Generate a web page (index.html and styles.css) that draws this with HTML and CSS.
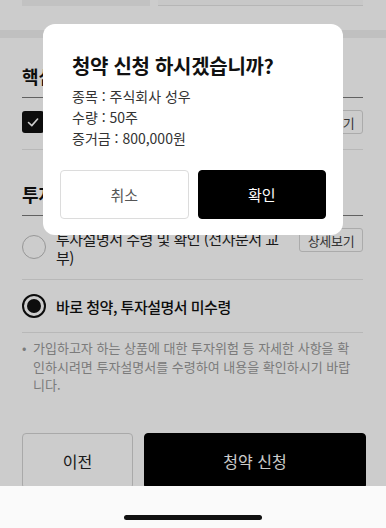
FILE: index.html
```html
<!DOCTYPE html>
<html lang="ko">
<head>
<meta charset="utf-8">
<link rel="stylesheet" href="styles.css">
</head>
<body>
<div class="page">
  <div class="fields">
    <div class="field field-gray"></div>
    <div class="field field-line"></div>
  </div>
  <div class="band"></div>

  <section class="section">
    <h2 class="sec-title">핵심설명서 확인</h2>
    <div class="row row-check">
      <span class="checkbox">
        <svg width="22" height="22" viewBox="0 0 22 22"><polyline points="6.5,11.5 9.8,14.6 15.6,8" fill="none" stroke="#fff" stroke-width="1.6" stroke-linecap="round" stroke-linejoin="round"/></svg>
      </span>
      <span class="row-text">핵심설명서 확인</span>
      <button class="detail">상세보기</button>
    </div>
  </section>

  <section class="section">
    <h2 class="sec-title sec-title2">투자설명서 교부 방식</h2>
    <div class="row row-radio1">
      <span class="radio"></span>
      <span class="row-text radio-text">투자설명서 수령 및 확인 (전자문서 교부)</span>
      <button class="detail">상세보기</button>
    </div>
    <div class="row row-radio2">
      <span class="radio radio-on"><span class="dot"></span></span>
      <span class="row-text radio-text strong">바로 청약, 투자설명서 미수령</span>
    </div>
    <p class="note"><span class="bullet">•</span><span class="note-text">가입하고자 하는 상품에 대한 투자위험 등 자세한 사항을 확인하시려면 투자설명서를 수령하여 내용을 확인하시기 바랍니다.</span></p>
  </section>

  <div class="actions">
    <button class="btn btn-prev">이전</button>
    <button class="btn btn-submit">청약 신청</button>
  </div>
</div>

<div class="overlay"></div>

<div class="modal">
  <h1 class="modal-title">청약 신청 하시겠습니까?</h1>
  <div class="modal-info">
    <p>종목 : 주식회사 성우</p>
    <p>수량 : 50주</p>
    <p>증거금 : 800,000원</p>
  </div>
  <div class="modal-btns">
    <button class="mbtn mbtn-cancel">취소</button>
    <button class="mbtn mbtn-ok">확인</button>
  </div>
</div>

<div class="home-bar"><span class="indicator"></span></div>
</body>
</html>
```
FILE: styles.css
```css
* { box-sizing: border-box; }
html, body { margin: 0; padding: 0; }
body {
  width: 386px;
  height: 528px;
  overflow: hidden;
  background: #fff;
  font-family: "Noto Sans CJK KR", "Noto Sans", sans-serif;
  color: #111;
}
.page { width: 386px; }

.fields {
  display: flex;
  gap: 8px;
  height: 6px;
  padding: 0 23px 0 22px;
}
.field { height: 6px; }
.field-gray { width: 128px; background: #f3f3f3; }
.field-line { flex: 1; border-bottom: 1px solid #e4e4e4; background: #fafafa; }

.band { margin-top: 24px; height: 8px; background: #f1f1f1; }

.section { padding: 0 23px 0 22px; }
.sec-title {
  margin: 0;
  padding: 25px 0 8px;
  font-size: 18px;
  line-height: 26px;
  font-weight: 700;
  border-bottom: 1px solid #7a7a7a;
}
.sec-title2 { padding-top: 31px; }

.row {
  display: flex;
  align-items: center;
  border-bottom: 1px solid #e6e6e6;
}
.row-check { padding: 12px 0 15px; }
.checkbox {
  width: 22px; height: 22px;
  border-radius: 3px;
  background: #111;
  display: flex;
  flex: none;
}
.row-text { flex: 1; margin-left: 12px; font-size: 15px; }
.detail {
  flex: none;
  width: 64px;
  height: 24px;
  padding: 0;
  border: 1px solid #d6d6d6;
  border-radius: 3px;
  background: #fff;
  font-family: inherit;
  font-size: 13px;
  color: #444;
  letter-spacing: -0.3px;
}
.row-radio1 { align-items: flex-start; padding: 13px 0 12px; }
.row-radio1 .radio { margin-top: 6px; }
.row-radio1 .detail { margin-top: -1px; margin-left: 8px; }
.row-radio2 { padding: 14px 0 14px; }
.radio {
  width: 24px; height: 24px;
  flex: none;
  border-radius: 50%;
  border: 1px solid #bdbdbd;
  display: flex;
  align-items: center;
  justify-content: center;
}
.radio-on { border: 2px solid #111; }
.dot { width: 14px; height: 14px; border-radius: 50%; background: #111; }
.radio-text {
  margin-left: 10px;
  font-size: 15px;
  line-height: 19px;
  letter-spacing: -0.5px;
  color: #222;
}
.strong { font-weight: 500; color: #111; }

.note {
  margin: 0;
  padding: 6px 10px 0 0;
  display: flex;
  font-size: 13px;
  line-height: 18.5px;
  color: #9a9a9a;
}
.bullet { width: 11px; flex: none; }
.note-text { flex: 1; word-break: break-all; line-break: anywhere; }

.actions {
  display: flex;
  gap: 11px;
  margin-top: 38px;
  padding: 0 20px 0 22px;
}
.btn {
  height: 56px;
  border-radius: 4px;
  font-family: inherit;
  font-size: 16px;
  padding: 0;
}
.btn-prev { width: 111px; background: #fff; border: 1px solid #d4d4d4; color: #222; }
.btn-submit { flex: 1; background: #000; border: 1px solid #000; color: #fff; }

.overlay {
  position: fixed;
  inset: 0;
  background: rgba(0, 0, 0, 0.2);
}

.modal {
  position: fixed;
  left: 43px;
  top: 24px;
  width: 300px;
  height: 211px;
  background: #fff;
  border-radius: 12px;
  padding: 28px 17px 16px;
}
.modal-title {
  margin: 0 0 0 12px;
  font-size: 20px;
  line-height: 28px;
  font-weight: 700;
  color: #111;
  letter-spacing: -0.3px;
}
.modal-info { margin: 6px 0 0 12px; }
.modal-info p {
  margin: 0;
  font-size: 14px;
  line-height: 21px;
  color: #333;
}
.modal-btns {
  display: flex;
  gap: 9px;
  margin-top: 21px;
}
.mbtn {
  flex: 1;
  height: 49px;
  border-radius: 4px;
  font-family: inherit;
  font-size: 15px;
  padding: 0;
}
.mbtn-cancel { background: #fff; border: 1px solid #dcdcdc; color: #555; }
.mbtn-ok { background: #000; border: 1px solid #000; color: #fff; }

.home-bar {
  position: fixed;
  left: 0;
  right: 0;
  bottom: 0;
  height: 42px;
  background: #fafafa;
  display: flex;
  justify-content: center;
  padding-top: 29px;
}
.indicator {
  width: 138px;
  height: 5px;
  border-radius: 3px;
  background: #111;
}
```
